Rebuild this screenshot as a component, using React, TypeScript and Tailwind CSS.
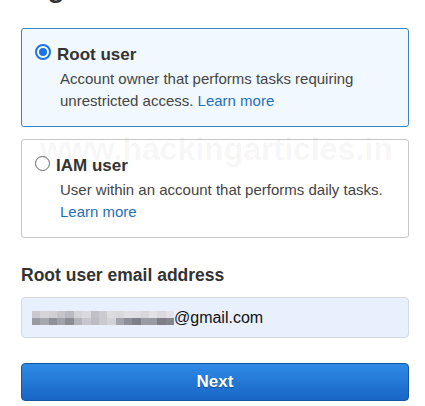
import { ReactNode } from 'react';

const font = { fontFamily: '"Liberation Sans", Arial, sans-serif' };

function Radio({ checked }: { checked?: boolean }) {
  return checked ? (
    <span className="flex h-[16px] w-[16px] shrink-0 items-center justify-center rounded-full border-2 border-[#1a73e8] bg-white">
      <span className="h-[8px] w-[8px] rounded-full bg-[#1a73e8]" />
    </span>
  ) : (
    <span className="mt-[1px] h-[15px] w-[15px] shrink-0 rounded-full border border-[#666] bg-white" />
  );
}

function Choice({ title, checked, children }: { title: string; checked?: boolean; children: ReactNode }) {
  return (
    <div
      className={`rounded-[3px] border pl-[13px] pr-3 pt-[15px] pb-[14px] ${
        checked ? 'border-[#3b83c2] bg-[#f1f9ff]' : 'border-[#c8c8c8] bg-white'
      }`}
    >
      <div className="flex items-start gap-[6px]">
        <Radio checked={checked} />
        <span className="text-[17px] font-bold leading-[22px] text-[#333]">{title}</span>
      </div>
      <p className="mt-[2px] pl-[25px] text-[15px] leading-[22px] text-[#444]">{children}</p>
    </div>
  );
}

// pixelated part of the email address
const blur = [
  ['#c9c9cf', '#9a9aa2'],
  ['#d4d4d9', '#a7a7ae'],
  ['#cfcfd4', '#8f8f97'],
  ['#c4c4ca', '#a1a1a8'],
  ['#b9b9c0', '#8c8c94'],
  ['#d3d3d8', '#b3b3ba'],
  ['#dadade', '#c6c6cc'],
  ['#c0c0c6', '#bcbcc2'],
  ['#cacacf', '#c9c9ce'],
  ['#dcdce0', '#d2d2d7'],
  ['#d9d9dd', '#a3a3aa'],
  ['#e0e0e4', '#8e8e96'],
  ['#dedee2', '#7f7f88'],
  ['#d8d8dc', '#9b9ba2'],
  ['#e2e2e6', '#9a9aa1'],
  ['#dadade', '#7e7e86'],
  ['#e3e3e7', '#85858d'],
];

function Censored() {
  return (
    <span className="flex w-[142px] items-stretch">
      {blur.map(([top, bottom], i) => (
        <span key={i} className="flex flex-1 flex-col">
          <span className="h-[7px]" style={{ background: top }} />
          <span className="h-[7px]" style={{ background: bottom }} />
        </span>
      ))}
    </span>
  );
}

export default function App() {
  return (
    <div className="relative flex min-h-[406px] flex-col bg-white pl-[21px] pr-[16px]" style={font}>
      <h1 className="-mt-[28px] mb-6 text-[28px] font-bold leading-[32px] text-[#333]">Sign in</h1>

      <div className="flex flex-col gap-[12px]">
        <Choice title="Root user" checked>
          Account owner that performs tasks requiring unrestricted access.{' '}
          <a className="text-[#1f6fb7]">Learn more</a>
        </Choice>
        <Choice title="IAM user">
          User within an account that performs daily tasks. <a className="text-[#1f6fb7]">Learn more</a>
        </Choice>
      </div>

      <label className="mt-[26px] text-[17.5px] font-bold leading-[22px] text-[#333]">Root user email address</label>

      <div className="mt-[11px] flex h-[41px] items-center rounded-[4px] border border-[#d5d9e0] bg-[#e8f0fe] pl-[10px] text-[16px] text-[#111]">
        <Censored />
        <span>@gmail.com</span>
      </div>

      <button className="mt-[25px] h-[38px] rounded-[4px] border border-[#15589e] bg-gradient-to-b from-[#2f8ae6] to-[#1866c6] text-[17px] font-bold text-white [text-shadow:0_1px_1px_rgba(0,0,0,0.35)]">
        Next
      </button>

      <span className="pointer-events-none absolute left-[40px] top-[131px] text-[32px] font-bold leading-[36px] text-black/[0.05]">
        www.hackingarticles.in
      </span>
    </div>
  );
}
